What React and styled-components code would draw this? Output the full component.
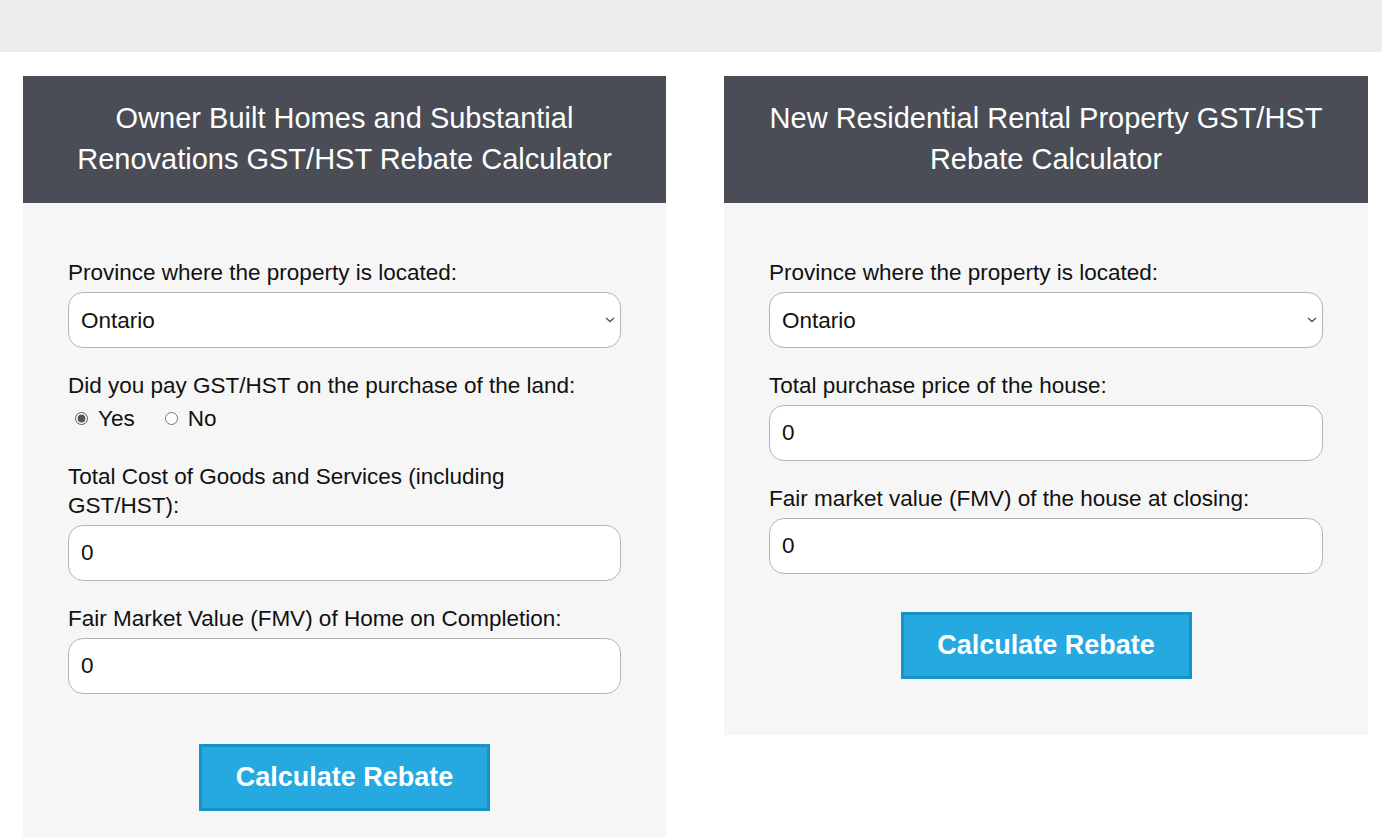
import React from "react";
import styled, { createGlobalStyle } from "styled-components";

const Global = createGlobalStyle`
  body {
    margin: 0;
    background: #ffffff;
    font-family: "Liberation Sans", Arial, sans-serif;
    color: #111;
  }
  * { box-sizing: border-box; }
`;

const Chevron = () => (
    <ChevronIcon width="10" height="6" viewBox="0 0 10 6">
        <path d="M1 1l4 3.5L9 1" fill="none" stroke="#555" strokeWidth="1.4" />
    </ChevronIcon>
);

const ProvinceSelect = () => (
    <SelectWrap>
        <Select defaultValue="Ontario">
            <option>Ontario</option>
        </Select>
        <Chevron />
    </SelectWrap>
);

const App = () => {
    return (
        <>
            <Global />
            <TopBar />
            <Cards>
                <Card>
                    <Header>Owner Built Homes and Substantial Renovations GST/HST Rebate Calculator</Header>
                    <Body>
                        <Field>
                            <Label>Province where the property is located:</Label>
                            <ProvinceSelect />
                        </Field>
                        <Field>
                            <Label>Did you pay GST/HST on the purchase of the land:</Label>
                            <RadioRow>
                                <RadioItem>
                                    <Radio type="radio" name="land" defaultChecked />
                                    Yes
                                </RadioItem>
                                <RadioItem>
                                    <Radio type="radio" name="land" />
                                    No
                                </RadioItem>
                            </RadioRow>
                        </Field>
                        <Field>
                            <Label>Total Cost of Goods and Services (including GST/HST):</Label>
                            <Input defaultValue="0" />
                        </Field>
                        <Field>
                            <Label>Fair Market Value (FMV) of Home on Completion:</Label>
                            <Input defaultValue="0" />
                        </Field>
                        <ButtonWrap space={27}>
                            <Button>Calculate Rebate</Button>
                        </ButtonWrap>
                    </Body>
                </Card>
                <Card>
                    <Header>New Residential Rental Property GST/HST Rebate Calculator</Header>
                    <Body>
                        <Field>
                            <Label>Province where the property is located:</Label>
                            <ProvinceSelect />
                        </Field>
                        <Field>
                            <Label>Total purchase price of the house:</Label>
                            <Input defaultValue="0" />
                        </Field>
                        <Field>
                            <Label>Fair market value (FMV) of the house at closing:</Label>
                            <Input defaultValue="0" />
                        </Field>
                        <ButtonWrap space={15}>
                            <Button>Calculate Rebate</Button>
                        </ButtonWrap>
                    </Body>
                </Card>
            </Cards>
        </>
    );
};

export default App;

const TopBar = styled.div`
  height: 52px;
  background: #ececec;
`;

const Cards = styled.div`
  display: grid;
  grid-template-columns: 643px 644px;
  column-gap: 58px;
  align-items: start;
  padding: 24px 0 0 23px;
`;

const Card = styled.div`
  display: flex;
  flex-direction: column;
  background: #f6f6f6;
`;

const Header = styled.div`
  background: #4a4d55;
  color: #ffffff;
  font-size: 29px;
  line-height: 41px;
  text-align: center;
  padding: 22px 30px 23px;
`;

const Body = styled.div`
  padding: 55px 45px 56px;
  display: flex;
  flex-direction: column;
`;

const Field = styled.div`
  display: flex;
  flex-direction: column;
  margin-bottom: 23px;
`;

const Label = styled.label`
  font-size: 22.5px;
  line-height: 29px;
  color: #111;
  margin-bottom: 5px;
  padding-right: 45px;
`;

const Input = styled.input`
  width: 100%;
  height: 56px;
  border: 1px solid #b4b4b4;
  border-radius: 15px;
  background: #ffffff;
  padding: 0 12px;
  font-family: "Liberation Sans", Arial, sans-serif;
  font-size: 22.5px;
  color: #111;
  outline: none;
`;

const SelectWrap = styled.div`
  position: relative;
`;

const Select = styled.select`
  width: 100%;
  height: 56px;
  border: 1px solid #b4b4b4;
  border-radius: 15px;
  background: #ffffff;
  padding: 0 12px;
  font-family: "Liberation Sans", Arial, sans-serif;
  font-size: 22.5px;
  color: #111;
  outline: none;
  appearance: none;
`;

const ChevronIcon = styled.svg`
  position: absolute;
  right: 6px;
  top: 25px;
  pointer-events: none;
`;

const RadioRow = styled.div`
  display: flex;
  gap: 27px;
  padding: 0 0 6px 4px;
  margin-top: -1px;
`;

const RadioItem = styled.label`
  display: flex;
  align-items: center;
  font-size: 22.5px;
  line-height: 29px;
  gap: 10px;
`;

const Radio = styled.input`
  width: 13px;
  height: 13px;
  margin: 0 0 0 3px;
  accent-color: #555;
`;

const ButtonWrap = styled.div`
  display: flex;
  justify-content: center;
  margin-top: ${(p) => p.space}px;
`;

const Button = styled.button`
  width: 291px;
  height: 67px;
  background: #26a9e0;
  border: 3px solid #1793c8;
  color: #ffffff;
  font-family: "Liberation Sans", Arial, sans-serif;
  font-size: 27px;
  font-weight: bold;
  cursor: pointer;
`;
